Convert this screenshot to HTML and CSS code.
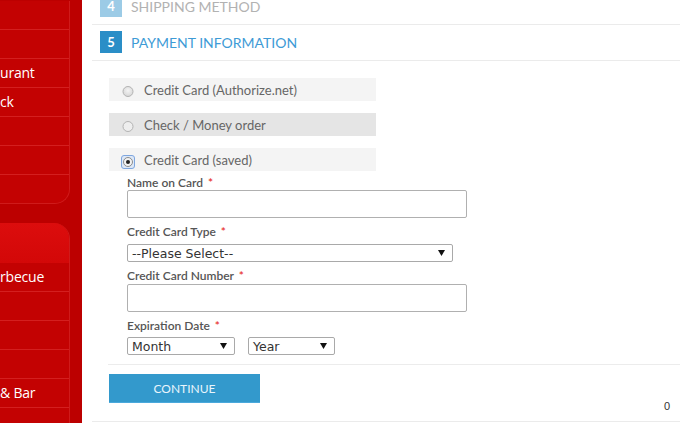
FILE: index.html
```html
<!DOCTYPE html>
<html lang="en">
<head>
<meta charset="utf-8">
<title>Checkout - Payment Information</title>
<link rel="stylesheet" href="styles.css">
</head>
<body>
<div class="page">
  <aside class="sidebar">
    <ul class="menu menu-top">
      <li></li>
      <li></li>
      <li>urant</li>
      <li>ck</li>
      <li></li>
      <li></li>
      <li></li>
    </ul>
    <div class="menu menu-bottom">
      <div class="menu-head"></div>
      <ul>
        <li>rbecue</li>
        <li></li>
        <li></li>
        <li></li>
        <li>&amp; Bar</li>
        <li></li>
      </ul>
    </div>
  </aside>

  <main class="checkout">
    <section class="step">
      <div class="step-head">
        <span class="step-num step-num-done">4</span>
        <span class="step-title">Shipping Method</span>
      </div>
    </section>

    <section class="step step-active">
      <div class="step-head">
        <span class="step-num">5</span>
        <span class="step-title">Payment Information</span>
      </div>
      <div class="step-body">
        <ul class="methods">
          <li class="method">
            <svg class="radio" width="14" height="14" viewBox="0 0 14 14"><defs><radialGradient id="rg1" cx="50%" cy="40%" r="60%"><stop offset="0" stop-color="#f4f4f4"/><stop offset="1" stop-color="#d6d6d6"/></radialGradient></defs><circle cx="7" cy="7.5" r="5" fill="url(#rg1)" stroke="#b3b3b3" stroke-width="1"/></svg>
            <span>Credit Card (Authorize.net)</span>
          </li>
          <li class="method method-alt">
            <svg class="radio" width="14" height="14" viewBox="0 0 14 14"><circle cx="7" cy="7.5" r="5" fill="#eeeeee" stroke="#b3b3b3" stroke-width="1"/></svg>
            <span>Check / Money order</span>
          </li>
          <li class="method">
            <svg class="radio" width="14" height="14" viewBox="0 0 14 14"><rect x="0.5" y="0.5" width="13" height="13" rx="2.5" fill="#dde8f7" stroke="#7ea6de" stroke-width="1"/><circle cx="7" cy="7" r="4.5" fill="#f2f2f2" stroke="#8c8c8c" stroke-width="1"/><circle cx="7" cy="7" r="2" fill="#222"/></svg>
            <span>Credit Card (saved)</span>
          </li>
        </ul>

        <div class="fields">
          <div class="field">
            <label class="field-label">Name on Card <em>*</em></label>
            <div class="text-input"></div>
          </div>
          <div class="field">
            <label class="field-label">Credit Card Type <em>*</em></label>
            <div class="select select-type">
              <span>--Please Select--</span>
              <svg width="7" height="6" viewBox="0 0 7 6"><polygon points="0,0 7,0 3.5,6" fill="#111"/></svg>
            </div>
          </div>
          <div class="field field-number">
            <label class="field-label">Credit Card Number <em>*</em></label>
            <div class="text-input"></div>
          </div>
          <div class="field">
            <label class="field-label">Expiration Date <em>*</em></label>
            <div class="date-row">
              <div class="select select-month">
                <span>Month</span>
                <svg width="7" height="6" viewBox="0 0 7 6"><polygon points="0,0 7,0 3.5,6" fill="#111"/></svg>
              </div>
              <div class="select select-year">
                <span>Year</span>
                <svg width="7" height="6" viewBox="0 0 7 6"><polygon points="0,0 7,0 3.5,6" fill="#111"/></svg>
              </div>
            </div>
          </div>
        </div>

        <div class="actions">
          <button class="btn-continue" type="button">Continue</button>
          <span class="counter">0</span>
        </div>
      </div>
    </section>
  </main>
</div>
</body>
</html>
```

FILE: styles.css
```css
* {
  box-sizing: border-box;
  margin: 0;
  padding: 0;
}

body {
  width: 680px;
  height: 423px;
  overflow: hidden;
  background: #ffffff;
  font-family: Lato, "Open Sans", sans-serif;
}

.page {
  display: flex;
  height: 423px;
}

/* ---------- sidebar ---------- */
.sidebar {
  width: 82px;
  flex: none;
  background: #bc0000;
  padding-top: 1px;
  overflow: hidden;
  font-family: "Open Sans", sans-serif;
  font-size: 14px;
  letter-spacing: -0.2px;
  color: #ffffff;
}

.menu {
  list-style: none;
  width: 70px;
  background: #c30202;
  border-right: 1px solid #cf1b1b;
}

.menu ul {
  list-style: none;
}

.menu li {
  height: 29px;
  line-height: 28px;
  border-bottom: 1px solid #d41f1f;
  white-space: nowrap;
  overflow: hidden;
}

.menu-top {
  border-bottom: 1px solid #cf1b1b;
  border-bottom-right-radius: 15px;
}

.menu-top li:last-child {
  height: 28px;
  border-bottom: none;
}

.menu-bottom {
  margin-top: 19px;
  border-top-right-radius: 16px;
  overflow: hidden;
}

.menu-head {
  height: 40px;
  background: linear-gradient(#dc0d0d, #d30808);
}

/* ---------- checkout ---------- */
.checkout {
  flex: 1;
  padding-left: 10px;
  margin-top: -11px;
}

.step {
  border-bottom: 1px solid #ebebeb;
}

.step-head {
  display: flex;
  align-items: center;
  gap: 9px;
  padding: 6px 0 7px 8px;
}

.step-active .step-head {
  border-bottom: 1px solid #ebebeb;
}

.step-num {
  width: 22px;
  height: 22px;
  flex: none;
  display: flex;
  align-items: center;
  justify-content: center;
  background: #2a8ec7;
  color: #ffffff;
  font-size: 13px;
  font-weight: 700;
}

.step-num-done {
  background: #9ccbe6;
}

.step-title {
  font-size: 14px;
  text-transform: uppercase;
  color: #b2b2b2;
}

.step-active .step-title {
  color: #3e9bd6;
}

.step-body {
  padding: 17px 0 18px 16px;
}

/* payment methods */
.methods {
  list-style: none;
  padding-left: 1px;
  display: flex;
  flex-direction: column;
  gap: 12px;
}

.method {
  width: 267px;
  height: 23px;
  display: flex;
  align-items: center;
  background: #f4f4f4;
  padding-left: 12px;
  font-size: 13px;
  color: #666666;
}

.method-alt {
  background: #e5e5e5;
}

.radio {
  flex: none;
  margin-right: 9px;
  margin-top: 2px;
}

.method:last-child .radio {
  margin-top: 4px;
}

/* fields */
.fields {
  padding-left: 19px;
  padding-top: 4px;
}

.field + .field {
  margin-top: 6px;
}

.field-label {
  display: block;
  height: 15px;
  line-height: 15px;
  font-size: 12px;
  font-weight: 600;
  color: #555555;
}

.field-label em {
  font-style: normal;
  color: #e8322c;
  margin-left: 2px;
}

.text-input {
  width: 340px;
  height: 28px;
  border: 1px solid #b0b0b0;
  border-radius: 2px;
  background: #ffffff;
}

.field-number .text-input {
  margin-top: 1px;
}

.select {
  display: flex;
  align-items: center;
  justify-content: space-between;
  height: 18px;
  margin-top: 4px;
  padding: 0 7px 0 4px;
  border: 1px solid #a9a9a9;
  border-radius: 2px;
  background: #ffffff;
  font-family: "DejaVu Sans", sans-serif;
  font-size: 12.5px;
  color: #333333;
}

.select-type {
  width: 326px;
  margin-top: 5px;
}

.date-row {
  display: flex;
  gap: 13px;
}

.select-month {
  width: 108px;
}

.select-year {
  width: 87px;
}

/* actions */
.actions {
  display: flex;
  justify-content: space-between;
  align-items: flex-end;
  margin-top: 9px;
  padding-top: 9px;
  border-top: 1px solid #ececec;
}

.btn-continue {
  width: 151px;
  height: 29px;
  margin-left: 1px;
  border: none;
  border-bottom: 1px solid #4aa9dc;
  background: #3399cc;
  color: #e9f5fc;
  font-family: Lato, sans-serif;
  font-size: 12px;
  text-transform: uppercase;
  cursor: pointer;
}

.counter {
  font-family: "Liberation Sans", sans-serif;
  font-size: 11px;
  line-height: 11px;
  color: #333333;
  margin-right: 10px;
  margin-bottom: -9px;
}
```
